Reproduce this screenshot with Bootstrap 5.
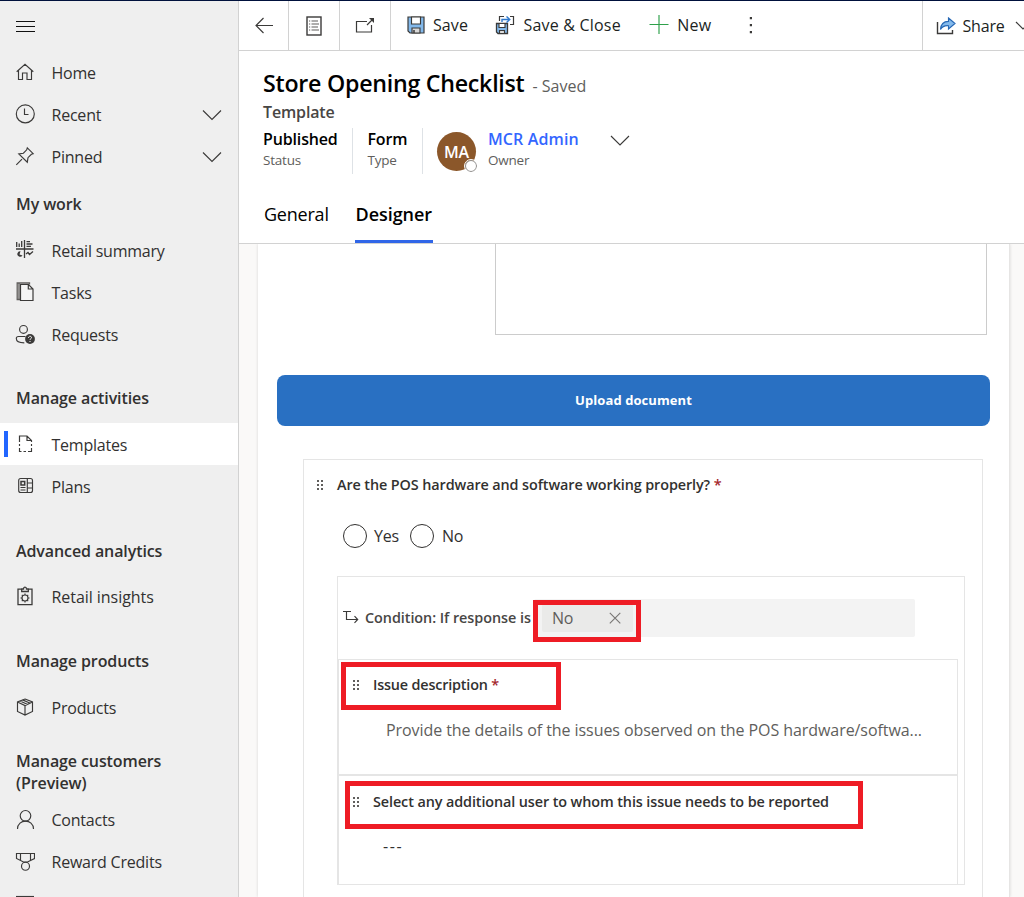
<!DOCTYPE html>
<html lang="en">
<head>
<meta charset="utf-8">
<meta name="viewport" content="width=device-width, initial-scale=1">
<title>Store Opening Checklist</title>
<link rel="stylesheet" href="https://cdn.jsdelivr.net/npm/bootstrap@5.3.0/dist/css/bootstrap.min.css">
<style>
body{font-family:"Open Sans","Noto Sans",sans-serif;font-size:16px;line-height:22px;color:#323130;background:#fff;letter-spacing:-.22px}
svg{display:block;flex:none;fill:none;stroke:#3b3a39;stroke-width:1.15}
.shell{height:897px;border-top:1px solid #00113c}
.side{width:239px;background:#efefef;border-right:1px solid #d2d2d2}
.burger{height:51px;padding:15px 0 0 15px}
.burger svg{stroke:#111}
.side .nav-link{height:42px;padding:0 16px 0 15px;color:#323130}
.side .nav-link.low{padding-top:2px}
.side .nav-link svg{margin:-2px 16.500px 0 0}
.side .nav-link svg.chev{margin:0}
.side .nav-link.active{background:#fff;position:relative}
.side .nav-link.active::before{content:"";position:absolute;left:4px;top:8px;width:4px;height:26px;background:#2266ff}
.side h2{font-size:16px;font-weight:600;line-height:22px;margin:0;padding-left:16px;letter-spacing:-.1px}
.bar{height:50px;border-bottom:1px solid #d2d2d2;color:#201f1e}
.cell{width:51px;border-right:1px solid #d2d2d2}
.cmd{letter-spacing:.08px}
.cmd span{padding-bottom:2px}
.head{height:193px;padding-left:24px;border-bottom:1px solid #d2d2d2}
h1{font-size:23.2px;font-weight:600;color:#000;line-height:32px;letter-spacing:-.25px}
.gray{color:#605e5c}
.tiny{font-size:13.5px;line-height:20px;color:#605e5c}
.strong6{font-weight:600;letter-spacing:-.15px}
.avatar{width:39px;height:39px;background:#8b572a;color:#fff;font-weight:600;font-size:16px}
.dot{right:-1px;bottom:-1px;width:12px;height:12px;border:1.5px solid #8a8886;background:#fff;outline:1px solid #fff}
.tabs{font-size:18px;line-height:26px;color:#000}
.tabs .on{font-weight:600;border-bottom:3px solid #3066e8;width:78px;padding-left:.5px;white-space:nowrap;letter-spacing:-.05px}
.canvas{background:#faf9f8}
.sheet{width:752px;margin-left:19px;padding:0 20px 0 19px;background:#fff;border-right:1px solid #e6e5e4;box-shadow:0 0 3px rgba(0,0,0,.14);height:100%}
.memo{width:492px;height:91px;margin-left:218px;border:1px solid #ccc;border-top:0}
.upload{width:713px;height:51px;margin-top:40px;padding-bottom:3px;background:#2970c2;border-radius:8px;color:#fff;font-size:13px;font-weight:700;letter-spacing:.08px;border:0}
.quiz{width:680px;height:460px;margin:33px 0 0 26px;border:1px solid #e5e5e5}
.q{font-size:14.4px;font-weight:600;line-height:20px;letter-spacing:-.1px;white-space:nowrap}
.red{color:#a4262c}
.grip{width:8px;height:12px;background:radial-gradient(circle,#605e5c 1.1px,transparent 1.4px) 0 0/4px 4px}
.round{width:24px;height:24px;border:1px solid #323130}
.cond{width:628px;height:309px;margin:28px 0 0 33px;border:1px solid #e5e5e5}
.field{width:381px;height:38px;background:#f3f3f3;border-radius:2px}
.tag{width:91px;height:28px;margin:5px 0 0 8px;background:#eaeae9;border-radius:2px;color:#605e5c}
.item{width:620px;border:1px solid #e5e5e5}
.mark-box{border:5px solid #ee1c25;position:absolute}
</style>
</head>
<body>
<div class="shell d-flex overflow-hidden">
<aside class="side flex-shrink-0 overflow-hidden">
  <div class="burger"><svg width="20" height="20"><path d="M1 5.500h19M1 10.500h19M1 15.500h19"/></svg></div>
  <nav class="nav flex-column flex-nowrap">
    <a class="nav-link d-flex align-items-center"><svg width="20" height="20"><path d="M1.700 9.800L10 2.300l8.300 7.500M3.500 8.500v9h4v-6.500h4.500v6.500h4.500v-9"/></svg>Home</a>
    <a class="nav-link d-flex align-items-center"><svg width="20" height="20"><circle cx="10.300" cy="9.900" r="9"/><path d="M9.500 4.500v6h4"/></svg><span class="flex-grow-1">Recent</span><svg class="chev" width="20" height="12"><path d="M1 1.500l9 9 9-9"/></svg></a>
    <a class="nav-link d-flex align-items-center"><svg width="20" height="20"><path d="M1.300 18.800l5.700-5.700M12.300 1.800l5.900 5.900-1.800.6-3.400 3.400-.7 4.500L3.800 7.900l4.600-.7 3.300-3.400z"/></svg><span class="flex-grow-1">Pinned</span><svg class="chev" width="20" height="12"><path d="M1 1.500l9 9 9-9"/></svg></a>
    <h2 style="padding-top:15px;padding-bottom:15px">My work</h2>
    <a class="nav-link d-flex align-items-center"><svg width="20" height="20"><path d="M1 9h17.500M9.500 0v18M1.700 2v5M4.200 3.500V7M6.700 1v6M11.500 1.700h3.500M11.500 4h6M11.500 6.300h4.500" stroke-width="1.300"/><path d="M5.500 11.200A2.800 2.800 0 1 0 7.500 15.500l-3-1z" fill="#3b3a39" stroke="none"/><path d="M11 14l2-1.500 1.500 2 3.500-3" stroke-width="1.300"/></svg>Retail summary</a>
    <a class="nav-link d-flex align-items-center"><svg width="20" height="20"><path d="M5.500 17.500h-3.300V1h12.300v1.500M4 1.500v16" style="stroke:#605e5c" stroke-width="1.300"/><path d="M5.500 2.500h8l4.500 4.500v11.500H5.500zM13.300 2.700V7h4.500" fill="#f5f5f5" stroke-width="1.200"/></svg>Tasks</a>
    <a class="nav-link d-flex align-items-center"><svg width="20" height="20"><circle cx="8.500" cy="5.400" r="3.900"/><path d="M10.500 12.500H3.500c-1.500 0-2.200.8-2.200 2 0 2.600 3 4.300 8 4.300"/><circle cx="15" cy="15" r="4.900" fill="#3b3a39" stroke="none"/><path d="M13.500 13.800c0-2 3-2 3-.2 0 1.100-1.500 1.100-1.500 2.200M15 17v1" style="stroke:#fff" stroke-width="1"/></svg>Requests</a>
    <h2 style="padding-top:31px;padding-bottom:14px">Manage activities</h2>
    <a class="nav-link low active d-flex align-items-center"><svg width="20" height="20"><path d="M4.500 8V2h7.500l4.500 4.500V8M12 2v4.500h4.500" stroke-width="1.200"/><path d="M4.500 10v2m0 2v3.500h2m2 0h2.500m2 0h3.500V14m0-4v2"/></svg>Templates</a>
    <a class="nav-link low d-flex align-items-center"><svg width="20" height="20"><rect x="3.700" y="2.500" width="13.800" height="14" rx="2"/><path d="M12.300 2.500v14M12.300 7h5M12.300 12h5M5.500 11.500h5M5.500 14h5"/><rect x="6" y="5.500" width="3.700" height="3.500" stroke-width="1.500"/></svg>Plans</a>
    <h2 style="padding-top:33px;padding-bottom:14px">Advanced analytics</h2>
    <a class="nav-link d-flex align-items-center"><svg width="20" height="20"><path d="M6.500 3.200H3v15.500h14V3.200h-3.500M6.700 5.500v-2.500h1.800c0-2.500 3-2.500 3 0h1.800v2.500z" stroke-width="1.300"/><circle cx="10" cy="12" r="3"/><path d="M10 7.500V9m0 6v1.500M5.500 12H7m6 0h1.500M6.800 8.800l1 1m4.400 4.400l1 1m0-6.400l-1 1m-4.400 4.400l-1 1"/></svg><span style="letter-spacing:-.05px">Retail insights</span></a>
    <h2 style="padding-top:32px;padding-bottom:15px">Manage products</h2>
    <a class="nav-link d-flex align-items-center"><svg width="20" height="20"><path d="M10 2l7.500 3v9.500L10 18l-7.500-3.500V5zM2.500 5L10 8.500 17.500 5M10 8.500V18M5 3.900l7.800 3.500M7.500 2.900l7.800 3.300"/></svg>Products</a>
    <h2 style="padding-top:21px;padding-bottom:5px">Manage customers<br>(Preview)</h2>
    <a class="nav-link d-flex align-items-center"><svg width="20" height="20"><circle cx="10.500" cy="6.800" r="5.300"/><path d="M2.500 20c0-10.500 16-10.500 16 0"/></svg>Contacts</a>
    <a class="nav-link d-flex align-items-center"><svg width="20" height="20"><path d="M1.500 2.500h18v5L12.500 11h-4l-7-3.500zM5.500 2.500v6.500M15.500 2.500v6.500"/><circle cx="10.500" cy="15.200" r="4"/></svg>Reward Credits</a>
    <a class="nav-link d-flex align-items-start"><svg width="20" height="10" style="margin-top:12px"><path d="M1 1.500h18"/></svg></a>
  </nav>
</aside>
<main class="flex-grow-1 d-flex flex-column" style="min-width:0">
  <div class="bar d-flex align-items-stretch flex-shrink-0">
    <div class="cell d-flex align-items-center justify-content-center" style="width:50px"><svg width="18" height="18"><path d="M1 8.500h17M8.500 1L1 8.500 8.500 16"/></svg></div>
    <div class="cell d-flex align-items-center justify-content-center"><svg width="16" height="20"><rect x="1" y="1" width="14" height="18" stroke-width="1.400"/><path d="M3 5h1.200M5.500 5H12M3 8h1.200M5.500 8H13M3 11h1.200M5.500 11H12M3 14h1.200M5.500 14H13" stroke="#605e5c"/></svg></div>
    <div class="cell d-flex align-items-center justify-content-center"><svg width="20" height="18"><path d="M12 4.500H1.500v10.500h15V8M12 8l6.500-6.500" stroke-width="1.200"/><path d="M14 1H19v5z" fill="#3b3a39" stroke="none"/></svg></div>
    <div class="cmd d-flex align-items-center flex-grow-1">
      <svg width="18" height="18" style="margin:-1px 0 0 16px"><path d="M1 1h16v16H3l-2-2z" fill="#83b9eb" stroke-width="1.200"/><path d="M4.500 1h9v7h-9z" fill="#fff"/><path d="M5 12h8v5H5z" fill="#d8d8d8"/><path d="M7 14v3" stroke-width="1.500"/></svg><span style="margin-left:8px">Save</span>
      <svg width="20" height="20" style="margin:-1px 0 0 27px"><path d="M1.500 8.500h11v10H3l-1.500-1.500z" fill="#83b9eb" stroke-width="1.300"/><path d="M4 8.500h6v4H4z" fill="#fff"/><path d="M4.500 15.500h5v3h-5z" fill="#ddd"/><path d="M4.500 6V1.500H9M15 1.500h3.500v8H15" stroke-width="1.200"/><path d="M7 7V4.500h7M11.500 1.500l3.300 3-3.300 3" style="stroke:#2f78cc" stroke-width="1.400"/></svg><span style="margin-left:8.500px;letter-spacing:.2px">Save &amp; Close</span>
      <svg width="20" height="20" style="margin:-1px 0 0 28.500px"><path d="M.5 9.500h19M10 0v19" style="stroke:#2ea04a"/></svg><span style="margin-left:8px;letter-spacing:.2px">New</span>
      <svg width="4" height="18" style="margin:-2px 0 0 38px"><path d="M.8 1h2.200v2.200H.8zM.8 8h2.200v2.200H.8zM.8 15h2.200v2.200H.8z" fill="#3b3a39" stroke="none"/></svg>
    </div>
    <div class="cmd d-flex align-items-center flex-shrink-0 overflow-hidden" style="width:102px;border-left:1px solid #d2d2d2;padding-left:13px">
      <svg width="20" height="18"><path d="M1.500 5v11.500h15V13" stroke-width="1.400"/><path d="M12.500 1l6.500 5.500-6.500 5.500V8.700C8.500 8.300 6 9.800 4.500 12.500c.3-5 3-8.200 8-8.200z" fill="#83b9eb" style="stroke:#2768b5"/></svg><span style="margin-left:6.500px;padding-bottom:0;width:41.500px;letter-spacing:-.2px">Share</span>
      <svg width="18" height="10" style="margin-left:11px"><path d="M1 1l7 7 7-7"/></svg>
    </div>
  </div>
  <div class="head d-flex flex-column flex-shrink-0">
    <div class="d-flex align-items-baseline" style="padding-top:16px"><h1 class="m-0">Store Opening Checklist</h1><span class="gray" style="margin-left:8px;letter-spacing:0">- Saved</span></div>
    <div class="strong6" style="color:#484644;margin-top:2px">Template</div>
    <div class="d-flex" style="margin-top:5px;height:46px">
      <div class="border-end" style="width:90px"><div class="strong6" style="color:#000">Published</div><div class="tiny">Status</div></div>
      <div class="border-end" style="width:70px;padding-left:14.500px"><div class="strong6" style="color:#000">Form</div><div class="tiny">Type</div></div>
      <div class="avatar rounded-circle d-flex align-items-center justify-content-center position-relative" style="margin:4px 0 0 14px">MA<span class="dot rounded-circle position-absolute"></span></div>
      <div style="margin-left:12px;width:122px"><div class="strong6" style="color:#3366ff;letter-spacing:.12px">MCR Admin</div><div class="tiny">Owner</div></div>
      <svg width="20" height="12" style="margin-top:7px"><path d="M1 1l9 9 9-9"/></svg>
    </div>
    <div class="tabs d-flex mt-auto" style="height:42px"><span style="margin-left:1px;width:91px">General</span><span class="on">Designer</span></div>
  </div>
  <div class="canvas flex-grow-1 overflow-hidden">
    <div class="sheet">
      <div class="memo"></div>
      <button class="upload d-block">Upload document</button>
      <div class="quiz">
        <div class="d-flex align-items-center" style="padding:15px 0 0 12px"><span class="grip"></span><span class="q" style="margin-left:13px">Are the POS hardware and software working properly? <span class="red">*</span></span></div>
        <div class="d-flex align-items-center" style="padding:29px 0 0 39px"><span class="round rounded-circle"></span><span style="margin-left:7px;width:36px">Yes</span><span class="round rounded-circle"></span><span style="margin-left:8px">No</span></div>
        <div class="cond position-relative">
          <div class="d-flex" style="padding:22px 0 0 5px;height:82px">
            <svg width="16" height="14" style="margin-top:11px"><path d="M0 1.500h8M3.500 1.500v8h11M11.500 6.200l3.200 3.300-3.200 3.300"/></svg>
            <span class="q" style="margin:9px 0 0 6px;width:169px;color:#484644;letter-spacing:-.05px">Condition: If response is</span>
            <div class="field"><div class="tag d-flex align-items-center"><span style="margin-left:10px;width:57px;padding-bottom:1px">No</span><svg width="12" height="12"><path d="M.8.800l10.500 10.500M11.300.8L.8 11.300" style="stroke:#797775"/></svg></div></div>
          </div>
          <div class="item" style="height:116px">
            <div class="d-flex align-items-center" style="padding:15px 0 0 13px"><span class="grip"></span><span class="q" style="margin-left:13px;letter-spacing:-.18px">Issue description <span class="red">*</span></span></div>
            <div class="gray text-nowrap" style="margin:24px 0 0 47px;letter-spacing:-.07px">Provide the details of the issues observed on the POS hardware/softwa...</div>
          </div>
          <div class="item" style="height:110px">
            <div class="d-flex align-items-center" style="padding:16px 0 0 13px"><span class="grip"></span><span class="q" style="margin-left:13px">Select any additional user to whom this issue needs to be reported</span></div>
            <div style="margin:23px 0 0 44px;letter-spacing:1.600px">---</div>
          </div>
          <div class="mark-box" style="left:195px;top:23px;width:108px;height:42px"></div>
          <div class="mark-box" style="left:3px;top:85px;width:220px;height:48px"></div>
          <div class="mark-box" style="left:7px;top:204px;width:518px;height:48px"></div>
        </div>
      </div>
    </div>
  </div>
</main>
</div>
<script src="https://cdn.jsdelivr.net/npm/bootstrap@5.3.0/dist/js/bootstrap.bundle.min.js"></script>
</body>
</html>
